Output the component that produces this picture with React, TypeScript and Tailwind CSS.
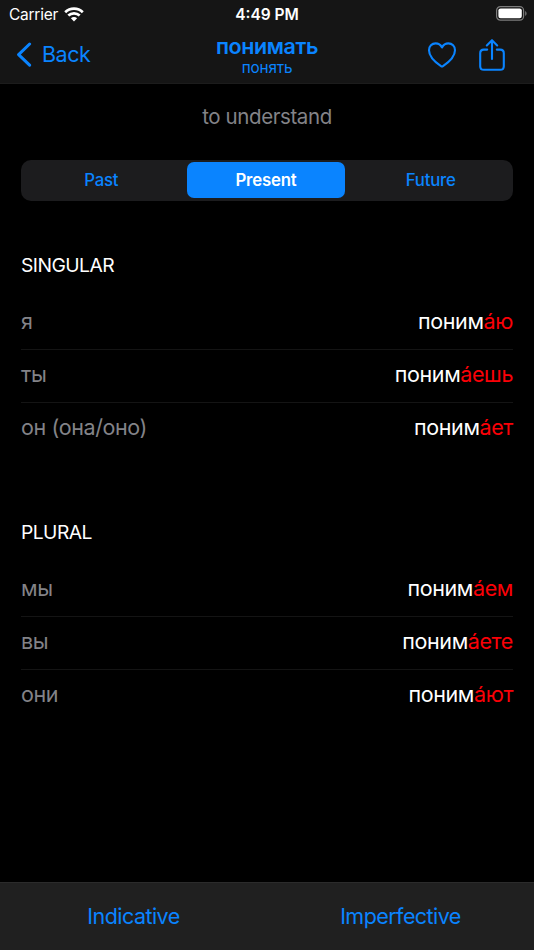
import React from 'react';
import clsx from 'clsx';

interface Conjugation {
  pronoun: string;
  stem: string;
  ending: string;
}

interface ConjugationSectionProps {
  title: string;
  rows: Conjugation[];
  className?: string;
}

const singular: Conjugation[] = [
  { pronoun: 'я', stem: 'поним', ending: 'а́ю' },
  { pronoun: 'ты', stem: 'поним', ending: 'а́ешь' },
  { pronoun: 'он (она/оно)', stem: 'поним', ending: 'а́ет' },
];

const plural: Conjugation[] = [
  { pronoun: 'мы', stem: 'поним', ending: 'а́ем' },
  { pronoun: 'вы', stem: 'поним', ending: 'а́ете' },
  { pronoun: 'они', stem: 'поним', ending: 'а́ют' },
];

const tenses = ['Past', 'Present', 'Future'];

const WifiIcon = () => (
  <svg width="20" height="15" viewBox="0 0 20 15" fill="none" stroke="white" strokeWidth="2.7">
    <path d="M1.2 5.2C6 .5 14 .5 18.8 5.2" />
    <path d="M4.3 8.6C7.5 5.6 12.5 5.6 15.7 8.6" />
    <path d="M10 14.4 6.9 11.3C8.6 9.7 11.4 9.7 13.1 11.3Z" fill="white" stroke="none" />
  </svg>
);

const BatteryIcon = () => (
  <svg width="32" height="16" viewBox="0 0 32 16" fill="none">
    <rect x="0.6" y="0.6" width="27" height="13.5" rx="3.8" stroke="#7c7c7c" strokeWidth="1.2" />
    <rect x="2.4" y="2.4" width="23.4" height="9.9" rx="2.2" fill="white" />
    <path d="M29.2 4.9C31 5.6 31 9.1 29.2 9.8Z" fill="#7c7c7c" />
  </svg>
);

const BackIcon = () => (
  <svg width="16" height="26" viewBox="0 0 16 26" fill="none" stroke="#0a84ff" strokeWidth="3" strokeLinecap="round" strokeLinejoin="round">
    <path d="M13.6 2 2.6 12.6 13.6 23.2" />
  </svg>
);

const HeartIcon = () => (
  <svg width="30" height="28" viewBox="0 0 30 28" fill="none" stroke="#0a84ff" strokeWidth="2.1" strokeLinejoin="round">
    <path d="M15 6.4C13.6 3.7 11.4 2.4 8.6 2.4C4.9 2.4 2 5.2 2 9.2C2 15.2 7.4 20.6 14 25.2Q15 25.9 16 25.2C22.6 20.6 28 15.2 28 9.2C28 5.2 25.1 2.4 21.4 2.4C18.6 2.4 16.4 3.7 15 6.4Z" />
  </svg>
);

const ShareIcon = () => (
  <svg width="26" height="33" viewBox="0 0 26 33" fill="none" stroke="#0a84ff" strokeWidth="2.1" strokeLinecap="round" strokeLinejoin="round">
    <path d="M8.2 11.6H4.8Q1.2 11.6 1.2 15.2V28.2Q1.2 31.8 4.8 31.8H21.2Q24.8 31.8 24.8 28.2V15.2Q24.8 11.6 21.2 11.6H17.8" />
    <path d="M13 21V2.4M7.8 7.4 13 2.2 18.2 7.4" />
  </svg>
);

const ConjugationSection: React.FC<ConjugationSectionProps> = ({ title, rows, className }) => (
  <section className={clsx('px-[21px]', className)}>
    <h2 className="h-[30px] text-[19.3px] leading-[29px] tracking-[-0.55px] text-white">{title}</h2>
    <ul className="mt-4">
      {rows.map((row) => (
        <li
          key={row.pronoun}
          className="flex h-[53px] items-center justify-between border-b border-[#141414] pb-[4px] text-[21.5px] last:border-b-0"
        >
          <span className="tracking-[-0.4px] text-[#838388]">{row.pronoun}</span>
          <span className="tracking-[-0.4px] text-white">
            {row.stem}
            <span className="text-[#fb0007]">{row.ending}</span>
          </span>
        </li>
      ))}
    </ul>
  </section>
);

export default function App() {
  return (
    <div className="flex h-[950px] w-[534px] flex-col overflow-hidden bg-black font-['Inter',sans-serif]">
      <header className="h-[84px] shrink-0 border-b border-[#1c1c1c] bg-[#151515]">
        <div className="grid h-7 grid-cols-[1fr_auto_1fr] items-center pr-[6px] pl-[9px] text-[15.5px] text-white">
          <div className="flex items-center gap-[6px]">
            <span className="pt-[2px] tracking-[-0.25px]">Carrier</span>
            <WifiIcon />
          </div>
          <span className="mr-[3px] pt-[2px] text-center font-semibold">4:49 PM</span>
          <div className="flex justify-end">
            <BatteryIcon />
          </div>
        </div>
        <nav className="grid h-[53px] grid-cols-3 text-[#0a84ff]">
          <button className="flex items-center gap-[10px] pl-4 text-[21.5px] tracking-[-0.5px]">
            <BackIcon />
            <span>Back</span>
          </button>
          <div className="flex flex-col items-center pt-[5px]">
            <h1 className="text-[21.5px] leading-[26px] font-semibold tracking-[-0.4px]">понимать</h1>
            <p className="text-[15.3px] leading-[18px] tracking-[-0.15px]">понять</p>
          </div>
          <div className="flex items-center justify-end gap-[22px] pr-[29px]">
            <HeartIcon />
            <ShareIcon />
          </div>
        </nav>
      </header>

      <main className="flex-1">
        <p className="mt-[18px] text-center text-[20.5px] leading-[30px] tracking-[-0.4px] text-[#838388]">to understand</p>
        <div className="mx-[21px] mt-[28px] grid h-[41px] grid-cols-3 gap-[6px] rounded-[10px] bg-[#1c1c1e] pt-[2px] pr-[3px] pb-[3px] pl-px">
          {tenses.map((tense) => (
            <button
              key={tense}
              className={clsx(
                'rounded-[7px] pt-[2px] text-[16.8px]',
                tense === 'Present'
                  ? 'bg-[#0a84ff] font-semibold tracking-[-0.2px] text-white'
                  : 'font-medium tracking-[-0.25px] text-[#0a84ff]',
              )}
            >
              {tense}
            </button>
          ))}
        </div>
        <ConjugationSection title="SINGULAR" rows={singular} className="mt-[50px]" />
        <ConjugationSection title="PLURAL" rows={plural} className="mt-[62px]" />
      </main>

      <footer className="grid h-[68px] shrink-0 grid-cols-2 border-t border-[#2b2b2b] bg-[#202020] text-[21.5px] tracking-[-0.55px] text-[#0a84ff]">
        <button>Indicative</button>
        <button>Imperfective</button>
      </footer>
    </div>
  );
}
